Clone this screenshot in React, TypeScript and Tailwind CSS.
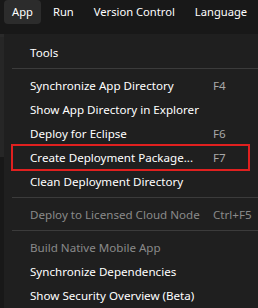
import React from 'react';

type Item =
    | { kind: 'item'; label: string; shortcut?: string; disabled?: boolean; marked?: boolean }
    | { kind: 'sep' };

const items: Item[] = [
    { kind: 'item', label: 'Tools' },
    { kind: 'sep' },
    { kind: 'item', label: 'Synchronize App Directory', shortcut: 'F4' },
    { kind: 'item', label: 'Show App Directory in Explorer' },
    { kind: 'item', label: 'Deploy for Eclipse', shortcut: 'F6' },
    { kind: 'item', label: 'Create Deployment Package...', shortcut: 'F7', marked: true },
    { kind: 'item', label: 'Clean Deployment Directory' },
    { kind: 'sep' },
    { kind: 'item', label: 'Deploy to Licensed Cloud Node', shortcut: 'Ctrl+F5', disabled: true },
    { kind: 'sep' },
    { kind: 'item', label: 'Build Native Mobile App', disabled: true },
    { kind: 'item', label: 'Synchronize Dependencies' },
    { kind: 'item', label: 'Show Security Overview (Beta)' },
];

const menus = ['App', 'Run', 'Version Control', 'Language'];

export default function App() {
    return (
        <div className="relative h-[308px] w-[258px] overflow-hidden bg-[#181818] text-white font-['Noto_Sans',sans-serif]">
            {/* menu bar */}
            <div className="flex h-[34px] items-start gap-[4px] pl-1 text-[11.2px]">
                {menus.map((m, i) => (
                    <div
                        key={m}
                        className={`flex h-6 items-center whitespace-nowrap rounded px-2 ${i === 0 ? 'bg-[#2c2c2c]' : ''}`}
                    >
                        {m}
                    </div>
                ))}
            </div>

            {/* underlying toolbar peeking out */}
            <div className="flex h-[3px] gap-[2px]">
                <div className="w-[206px] bg-[#2a2a2a]" />
                <div className="flex-1 bg-[#2a2a2a]" />
            </div>
            <div className="h-[120px] w-1 bg-[#262626]" />

            {/* dropdown */}
            <div className="absolute left-1 top-[34px] w-[270px] bg-[#1f1f1f] pt-[7px] pb-2 text-[11.6px]">
                {items.map((it, i) =>
                    it.kind === 'sep' ? (
                        <div key={i} className="ml-2 mt-[3px] mb-[5px] h-px bg-[#3b3b3b]" />
                    ) : (
                        <div
                            key={i}
                            className={`relative flex h-6 items-center whitespace-nowrap pl-[26px] ${it.disabled ? 'text-[#8a8a8a]' : 'text-white'}`}
                        >
                            <span className="w-[183px]">{it.label}</span>
                            {it.shortcut && (
                                <span className={it.disabled ? 'text-[#8a8a8a]' : 'text-[#a8a8a8]'}>{it.shortcut}</span>
                            )}
                            {it.marked && (
                                <div className="absolute left-[7px] top-[-2px] h-[27px] w-[239px] border-2 border-[#e0201f]" />
                            )}
                        </div>
                    )
                )}
            </div>
        </div>
    );
}
